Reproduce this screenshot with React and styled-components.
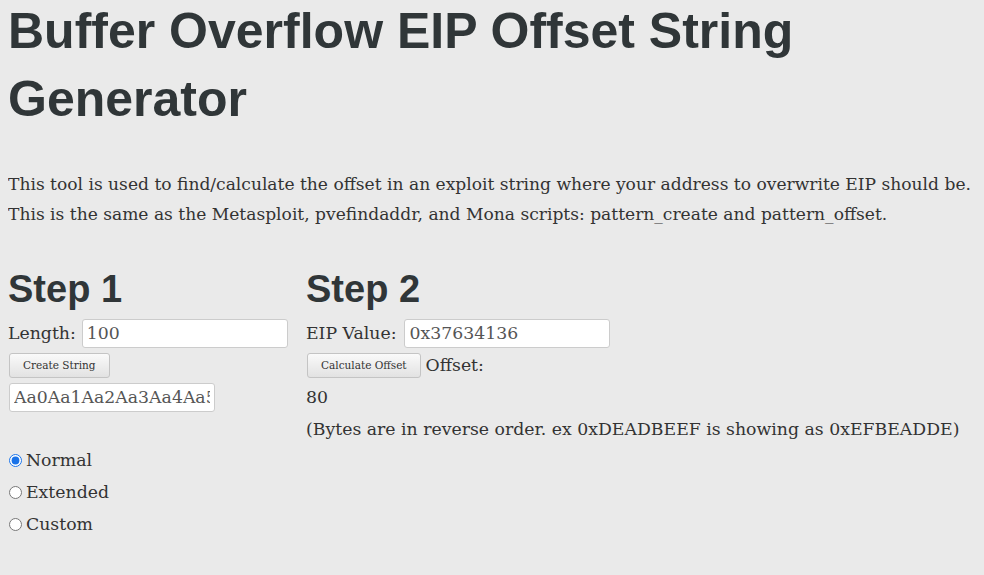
import React, { useState } from "react";
import styled, { createGlobalStyle } from "styled-components";

const GlobalStyle = createGlobalStyle`
  body {
    margin: 0 8px;
    background: #eaeaea;
    color: #333;
    font-family: "DejaVu Serif", Georgia, serif;
    font-size: 17.3px;
  }
`;

const Title = styled.h1`
  margin: -3px 0 0;
  font-family: "Liberation Sans", Arial, sans-serif;
  font-weight: bold;
  font-size: 50px;
  line-height: 68px;
  color: #303638;
`;

const Intro = styled.p`
  margin: 36px 0 0;
  font-size: 17.1px;
  line-height: 30px;
  white-space: nowrap;
`;

const Steps = styled.div`
  display: flex;
  margin-top: 38px;
`;

const Column = styled.div`
  width: ${(p) => p.$width || "auto"};
  flex: ${(p) => (p.$width ? "none" : "1")};
`;

const StepTitle = styled.h2`
  margin: 0 0 6px;
  font-family: "Liberation Sans", Arial, sans-serif;
  font-weight: bold;
  font-size: 38px;
  line-height: 44px;
  color: #303638;
`;

const Row = styled.div`
  display: flex;
  align-items: center;
  gap: ${(p) => p.$gap || "5px"};
  min-height: 32px;
`;

const TextInput = styled.input`
  box-sizing: border-box;
  width: ${(p) => p.$width || "206px"};
  height: 29px;
  margin-left: 1px;
  border: 1px solid #ccc;
  border-radius: 3px;
  background: #fff;
  padding: 0 4px;
  font-family: inherit;
  font-size: 17.3px;
  color: #555;
`;

const Button = styled.button`
  height: 25px;
  margin-left: 1px;
  padding: 0 13px;
  border: 1px solid #c4c4c4;
  border-radius: 3px;
  background: linear-gradient(#fafafa, #e2e2e2);
  font-family: inherit;
  font-size: 10.5px;
  color: #333;
`;

const Plain = styled.div`
  line-height: 32px;
`;

const Options = styled.div`
  margin-top: 31px;
`;

const Option = styled.label`
  display: flex;
  align-items: center;
  height: 32px;
  gap: 4px;
  input {
    margin: 0 0 0 1px;
    width: 13px;
    height: 13px;
    accent-color: #1a73e8;
  }
`;

export default function App() {
  const [mode, setMode] = useState("normal");
  return (
    <>
      <GlobalStyle />
      <Title>Buffer Overflow EIP Offset String Generator</Title>
      <Intro>
        This tool is used to find/calculate the offset in an exploit string where your address to overwrite EIP should be.
        <br />
        This is the same as the Metasploit, pvefindaddr, and Mona scripts: pattern_create and pattern_offset.
      </Intro>
      <Steps>
        <Column $width="298px">
          <StepTitle>Step 1</StepTitle>
          <Row>
            Length: <TextInput defaultValue="100" />
          </Row>
          <Row>
            <Button>Create String</Button>
          </Row>
          <Row>
            <TextInput defaultValue="Aa0Aa1Aa2Aa3Aa4Aa5Aa6Aa7" />
          </Row>
          <Options>
            {["Normal", "Extended", "Custom"].map((o) => (
              <Option key={o}>
                <input
                  type="radio"
                  name="mode"
                  checked={mode === o.toLowerCase()}
                  onChange={() => setMode(o.toLowerCase())}
                />
                {o}
              </Option>
            ))}
          </Options>
        </Column>
        <Column>
          <StepTitle>Step 2</StepTitle>
          <Row $gap="7px">
            EIP Value: <TextInput defaultValue="0x37634136" />
          </Row>
          <Row>
            <Button>Calculate Offset</Button> Offset:
          </Row>
          <Plain>80</Plain>
          <Plain>(Bytes are in reverse order. ex 0xDEADBEEF is showing as 0xEFBEADDE)</Plain>
        </Column>
      </Steps>
    </>
  );
}
